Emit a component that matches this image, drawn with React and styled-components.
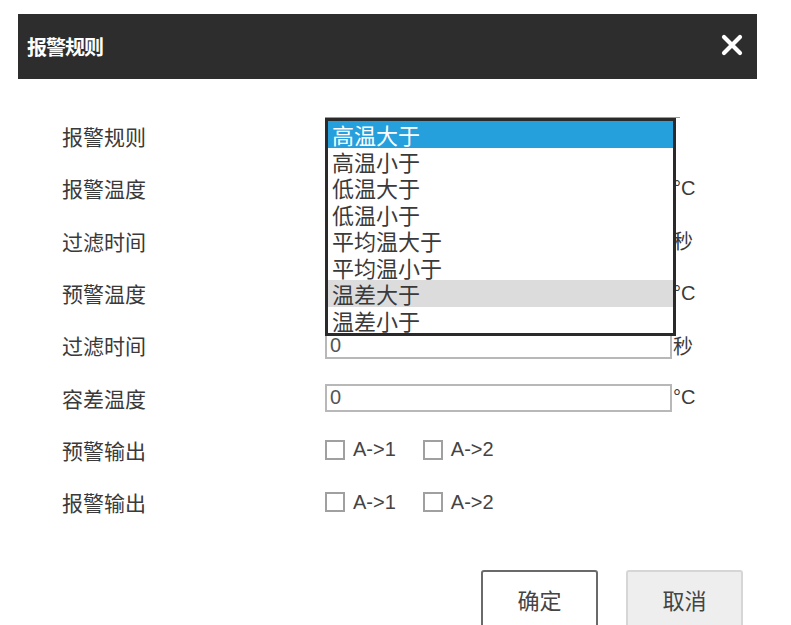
import React from 'react';
import styled, { createGlobalStyle } from 'styled-components';

const GlobalStyle = createGlobalStyle`
  html, body {
    margin: 0;
    padding: 0;
    height: 625px;
    overflow: hidden;
    background: #fff;
    font-family: "Liberation Sans", "Noto Sans CJK SC", sans-serif;
  }
`;

const Dialog = styled.div`
  width: 739px;
  padding: 14px 0 0 18px;
`;

const TitleBar = styled.div`
  height: 65px;
  background: #2d2d2d;
  display: flex;
  align-items: center;
  justify-content: space-between;
  padding: 0 14px 0 9px;
  box-sizing: border-box;
`;

const Title = styled.span`
  color: #fff;
  font-family: "Noto Sans CJK SC", sans-serif;
  font-size: 20px;
  font-weight: 700;
  letter-spacing: -1px;
`;

const Close = styled.button`
  border: none;
  background: none;
  padding: 0;
  width: 22px;
  height: 22px;
  display: flex;
  margin-top: -3px;
`;

const Form = styled.div`
  margin-top: 31px;
  padding-left: 44px;
`;

const Row = styled.div`
  display: flex;
  align-items: center;
  height: 52.3px;
`;

const Label = styled.span`
  width: 263px;
  flex: none;
  font-family: "Noto Sans CJK SC", sans-serif;
  font-size: 21px;
  color: #3a3a3a;
`;

const SelectBox = styled.div`
  position: relative;
  width: 355px;
  height: 38px;
  box-sizing: border-box;
  border-top: 1px solid #999;
`;

const List = styled.ul`
  position: absolute;
  top: 0;
  left: 0;
  width: 351px;
  margin: 0;
  padding: 0;
  list-style: none;
  border: 3px solid #2a2a2a;
  box-sizing: border-box;
  background: #fff;
  z-index: 2;
`;

const Option = styled.li`
  height: 26.5px;
  line-height: 26.5px;
  padding-left: 4px;
  font-family: "Noto Sans CJK SC", sans-serif;
  font-size: 22px;
  color: ${p => (p.$selected ? '#fff' : '#3a3a3a')};
  background: ${p => (p.$selected ? '#25a0dc' : p.$hover ? '#dcdcdc' : 'transparent')};
`;

const Input = styled.input`
  width: 347px;
  height: 28px;
  box-sizing: border-box;
  border: 2px solid #b8b8b8;
  padding: 0 3px;
  font-family: "Liberation Sans", sans-serif;
  font-size: 20px;
  color: #555;
  outline: none;
`;

const Unit = styled.span`
  font-family: "Liberation Sans", "Noto Sans CJK SC", sans-serif;
  font-size: 20px;
  color: #3a3a3a;
  margin-left: 1px;
`;

const Checks = styled.div`
  display: flex;
  align-items: center;
  gap: 27px;
`;

const Check = styled.label`
  display: flex;
  align-items: center;
  gap: 8px;
  font-family: "Liberation Sans", sans-serif;
  font-size: 20px;
  color: #444;
`;

const Box = styled.span`
  width: 20px;
  height: 20px;
  box-sizing: border-box;
  border: 2px solid #a0a0a0;
  background: #fff;
`;

const Buttons = styled.div`
  display: flex;
  gap: 28px;
  margin: 42px 0 0 463px;
`;

const Button = styled.button`
  width: 117px;
  height: 58px;
  border-radius: 3px;
  box-sizing: border-box;
  border: 2px solid ${p => (p.$primary ? '#6a6a6a' : '#d6d6d6')};
  background: ${p => (p.$primary ? '#fff' : '#eeeeee')};
  font-family: "Noto Sans CJK SC", sans-serif;
  font-size: 22px;
  color: #444;
`;

const rules = ['高温大于', '高温小于', '低温大于', '低温小于', '平均温大于', '平均温小于', '温差大于', '温差小于'];

const inputRows = [
  ['报警温度', '°C'],
  ['过滤时间', '秒'],
  ['预警温度', '°C'],
  ['过滤时间', '秒'],
  ['容差温度', '°C'],
];

const Outputs = () => (
  <Checks>
    <Check><Box />A-&gt;1</Check>
    <Check><Box />A-&gt;2</Check>
  </Checks>
);

export default function App() {
  return (
    <>
      <GlobalStyle />
      <Dialog>
        <TitleBar>
          <Title>报警规则</Title>
          <Close aria-label="close">
            <svg width="22" height="22" viewBox="0 0 22 22">
              <path d="M3 3 L19 19 M19 3 L3 19" stroke="#fff" strokeWidth="4.2" strokeLinecap="round" />
            </svg>
          </Close>
        </TitleBar>

        <Form>
          <Row>
            <Label>报警规则</Label>
            <SelectBox>
              <List>
                {rules.map((r, i) => (
                  <Option key={r} $selected={i === 0} $hover={i === 6}>{r}</Option>
                ))}
              </List>
            </SelectBox>
          </Row>
          {inputRows.map(([label, unit], i) => (
            <Row key={i}>
              <Label>{label}</Label>
              <Input defaultValue="0" />
              <Unit>{unit}</Unit>
            </Row>
          ))}
          <Row>
            <Label>预警输出</Label>
            <Outputs />
          </Row>
          <Row>
            <Label>报警输出</Label>
            <Outputs />
          </Row>
        </Form>

        <Buttons>
          <Button $primary>确定</Button>
          <Button>取消</Button>
        </Buttons>
      </Dialog>
    </>
  );
}
